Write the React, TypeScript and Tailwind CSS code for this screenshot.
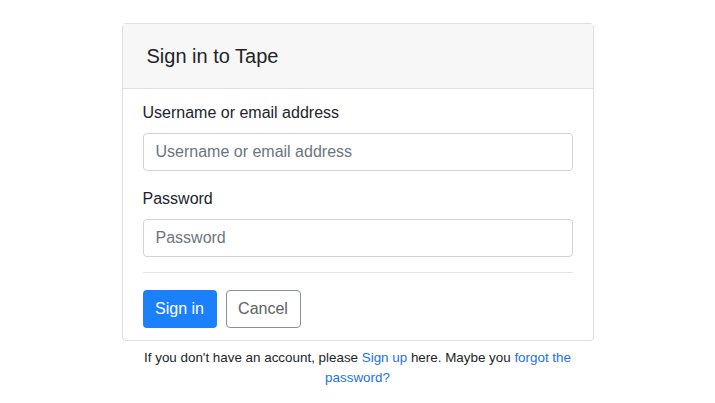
export default function App() {
  return (
    <div className="min-h-[403px] w-full bg-white font-['Liberation_Sans',Arial,sans-serif] text-[#212529]">
      <div className="mx-auto w-[472px] pt-[23px]">
        <div className="rounded-[4px] border border-[#dfdfdf] bg-white">
          <div className="flex h-[65px] items-center border-b border-[#dfdfdf] bg-[#f7f7f7] px-6 text-[20px]">
            Sign in to Tape
          </div>
          <form className="flex flex-col px-5 pb-3 pt-3">
            <label className="mb-2 text-[16px] leading-6">Username or email address</label>
            <input
              className="h-[38px] rounded-[4px] border border-[#ced4da] px-3 text-[16px] placeholder:text-[#6c757d] outline-none"
              placeholder="Username or email address"
            />
            <label className="mb-2 mt-4 text-[16px] leading-6">Password</label>
            <input
              type="password"
              className="h-[38px] rounded-[4px] border border-[#ced4da] px-3 text-[16px] placeholder:text-[#6c757d] outline-none"
              placeholder="Password"
            />
            <hr className="mb-[17px] mt-[15px] border-t border-[#e5e5e5]" />
            <div className="flex gap-[9px]">
              <button
                type="button"
                className="h-[38px] w-[74px] rounded-[4px] bg-[#1a80fb] text-[16px] text-white"
              >
                Sign in
              </button>
              <button
                type="button"
                className="h-[38px] w-[75px] rounded-[4px] border border-[#8a9096] text-[16px] text-[#5c6268]"
              >
                Cancel
              </button>
            </div>
          </form>
        </div>
        <p className="mt-[7px] px-4 text-center text-[13.4px] leading-5">
          If you don't have an account, please <a className="text-[#1a73e8]">Sign up</a> here. Maybe you{" "}
          <a className="text-[#1a73e8]">forgot the password?</a>
        </p>
      </div>
    </div>
  );
}
